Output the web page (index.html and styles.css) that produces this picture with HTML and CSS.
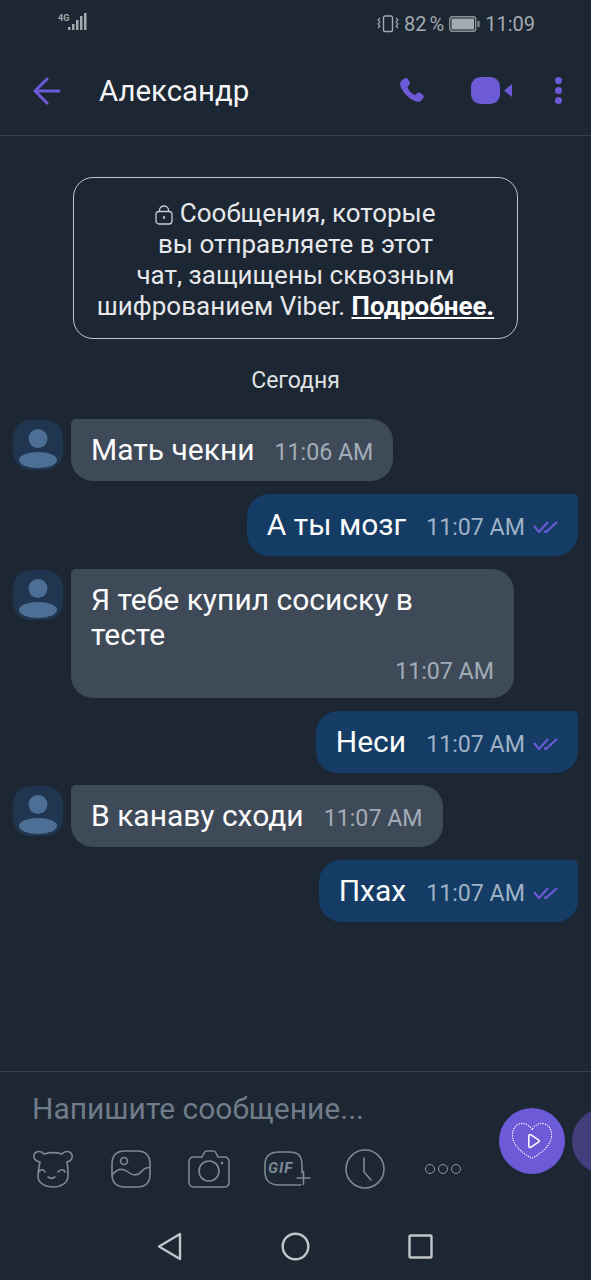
FILE: index.html
```html
<!DOCTYPE html>
<html>
<head>
  <meta charset="utf-8">
  <link rel="stylesheet" href="styles.css">
</head>
<body>
  <div class="status-bar">
    <svg class="signal" width="30" height="20" viewBox="0 0 30 20">
      <text x="0" y="8" class="signal-label">4G</text>
      <rect x="10" y="14" width="2.5" height="3" fill="#a4aab1"/>
      <rect x="14" y="11" width="2.5" height="6" fill="#a4aab1"/>
      <rect x="18" y="7" width="2.5" height="10" fill="#a4aab1"/>
      <rect x="22" y="3" width="2.5" height="14" fill="#a4aab1"/>
      <rect x="26" y="0" width="2.5" height="17" fill="#a4aab1"/>
    </svg>
    <div class="status-right">
      <svg width="22" height="18" viewBox="0 0 22 18" fill="none" stroke="#a4aab1" stroke-width="1.4">
        <rect x="6.5" y="1" width="9" height="15.5" rx="1.5"/>
        <path d="M3 3 1 5l2 2-2 2 2 2-2 2M19 3l2 2-2 2 2 2-2 2 2 2" stroke-width="1.1"/>
      </svg>
      <span class="status-pct">82 %</span>
      <svg width="31" height="16" viewBox="0 0 31 16">
        <rect x="0.7" y="0.7" width="26" height="14.6" rx="2.5" fill="none" stroke="#8e949b" stroke-width="1.4"/>
        <rect x="2.5" y="2.5" width="22.5" height="11" fill="#a4aab1"/>
        <rect x="28.5" y="5" width="2" height="6" fill="#8e949b"/>
      </svg>
      <span class="status-time">11:09</span>
    </div>
  </div>

  <header class="chat-header">
    <svg class="back-arrow" width="28" height="28" viewBox="0 0 28 28" fill="none" stroke="#6c5ad6" stroke-width="3" stroke-linecap="round" stroke-linejoin="round">
      <path d="M26 14H3M14 2 2 14l12 12"/>
    </svg>
    <div class="chat-title">Александр</div>
    <svg class="icon-phone" width="26" height="27" viewBox="0 0 28 28" preserveAspectRatio="none">
      <path d="M6.5 1.2c1.200-.6 2.300-.2 3 .9l2 3.200c.6 1 .4 2.100-.4 2.800L9.600 9.500c-.5.400-.6 1-.3 1.600 1.600 3.300 4 5.800 7.300 7.400.6.300 1.200.2 1.600-.3l1.500-1.500c.8-.8 1.900-.9 2.900-.3l2.900 1.900c1.100.7 1.500 2 .8 3.100-1.200 2.100-2.800 4.300-5.300 4.300C12.500 25.500 1 13.500 1.200 6.700 1.300 4.300 4.500 2.300 6.500 1.200z" fill="#6c5ad6"/>
    </svg>
    <svg class="icon-video" width="41" height="27" viewBox="0 0 41 27">
      <rect x="0" y="0" width="29" height="27" rx="9.5" fill="#6c5ad6"/>
      <path d="M41 7v13l-8-6.500z" fill="#6c5ad6"/>
    </svg>
    <div class="menu-dots"><i></i><i></i><i></i></div>
  </header>

  <main class="chat">
    <div class="notice">
      <svg class="lock" width="18" height="20" viewBox="0 0 18 20" fill="none" stroke="#c9cdd2" stroke-width="1.300">
        <rect x="1" y="6.500" width="16" height="12.500" rx="3"/>
        <path d="M4.500 6.500V5a4.500 4 0 0 1 9 0v1.500"/>
        <path d="M9 11v3" stroke-width="1.600"/>
      </svg>
      Сообщения, которые<br>вы отправляете в этот<br>чат, защищены сквозным<br>шифрованием Viber. <a class="more">Подробнее.</a>
    </div>
    <div class="date">Сегодня</div>

    <div class="row row-in">
      <svg class="avatar" width="50" height="50" viewBox="0 0 50 50">
        <rect width="50" height="50" rx="18" fill="#1f3550"/>
        <circle cx="25" cy="18.500" r="9.500" fill="#4d6f95"/>
        <ellipse cx="25" cy="40" rx="19" ry="8" fill="#4d6f95"/>
      </svg>
      <div class="bubble bubble-in"><span class="text">Мать чекни</span><span class="time">11:06 AM</span></div>
    </div>

    <div class="row row-out">
      <div class="bubble bubble-out"><span class="text">А ты мозг</span><span class="time">11:07 AM</span>
        <svg class="ticks" width="25" height="14" viewBox="0 0 25 14" fill="none" stroke="#6c5ad6" stroke-width="2.100"><path d="M1 6l5 6L15 2M11 11l2 1L24 2"/></svg>
      </div>
    </div>

    <div class="row row-in">
      <svg class="avatar" width="50" height="50" viewBox="0 0 50 50">
        <rect width="50" height="50" rx="18" fill="#1f3550"/>
        <circle cx="25" cy="18.500" r="9.500" fill="#4d6f95"/>
        <ellipse cx="25" cy="40" rx="19" ry="8" fill="#4d6f95"/>
      </svg>
      <div class="bubble bubble-in bubble-long">
        <div class="text">Я тебе купил сосиску в<br>тесте</div>
        <div class="time">11:07 AM</div>
      </div>
    </div>

    <div class="row row-out">
      <div class="bubble bubble-out"><span class="text">Неси</span><span class="time">11:07 AM</span>
        <svg class="ticks" width="25" height="14" viewBox="0 0 25 14" fill="none" stroke="#6c5ad6" stroke-width="2.100"><path d="M1 6l5 6L15 2M11 11l2 1L24 2"/></svg>
      </div>
    </div>

    <div class="row row-in">
      <svg class="avatar" width="50" height="50" viewBox="0 0 50 50">
        <rect width="50" height="50" rx="18" fill="#1f3550"/>
        <circle cx="25" cy="18.500" r="9.500" fill="#4d6f95"/>
        <ellipse cx="25" cy="40" rx="19" ry="8" fill="#4d6f95"/>
      </svg>
      <div class="bubble bubble-in"><span class="text">В канаву сходи</span><span class="time">11:07 AM</span></div>
    </div>

    <div class="row row-out">
      <div class="bubble bubble-out"><span class="text">Пхах</span><span class="time">11:07 AM</span>
        <svg class="ticks" width="25" height="14" viewBox="0 0 25 14" fill="none" stroke="#6c5ad6" stroke-width="2.100"><path d="M1 6l5 6L15 2M11 11l2 1L24 2"/></svg>
      </div>
    </div>
  </main>

  <footer class="composer">
    <div class="placeholder">Напишите сообщение...</div>
    <div class="tools">
      <div class="tool">
        <svg width="42" height="38" viewBox="0 0 42 38" fill="none" stroke="#7d8996" stroke-width="1.600" stroke-linecap="round">
          <path d="M8 12C3 11 1 8 2 5 3 1 9 0 12 4c5-1.500 13-1.500 18 0 3-4 9-3 10 1 1 3-1 6-5 7 1 5 1 10 1 14 0 7-7 11-15 11S6 33 6 26c0-4 1-9 2-14z"/>
          <path d="M7 22c1-3 5-3 6 0M26 22c2-3 6-3 7 0M16 27c2 1.500 5 1.500 7 0"/>
        </svg>
      </div>
      <div class="tool">
        <svg width="40" height="38" viewBox="0 0 40 38" fill="none" stroke="#7d8996" stroke-width="1.600">
          <path d="M14 1h12c9 0 13 4 13 13v10c0 9-4 13-13 13H14C5 37 1 33 1 24V14C1 5 5 1 14 1z"/>
          <circle cx="13" cy="11" r="3.500"/>
          <path d="M1 25c6-7 11-7 16-3s10 4 14-1c3-3 6-4 8-3"/>
        </svg>
      </div>
      <div class="tool">
        <svg width="42" height="38" viewBox="0 0 42 38" fill="none" stroke="#7d8996" stroke-width="1.600">
          <path d="M6 7h8l2-4c.5-1.300 1.500-2 3-2h6c1.500 0 2.500.7 3 2l2 4h6c3 0 5 2 5 5v20c0 3-2 5-5 5H6c-3 0-5-2-5-5V12c0-3 2-5 5-5z"/>
          <circle cx="21" cy="21" r="10"/>
          <circle cx="34" cy="13" r="1.300" fill="#7d8996" stroke="none"/>
        </svg>
      </div>
      <div class="tool tool-gif">
        <svg width="47" height="36" viewBox="0 0 47 36" fill="none" stroke="#7d8996" stroke-width="1.600" stroke-linecap="round">
          <path d="M37 34H15C6 34 1 29 1 21v-7C1 5 6 1 15 1h10c9 0 13 3 13 14v7"/>
          <path d="M33 27h13M39.500 20.500v13" stroke-width="1.600"/>
        </svg>
        <span class="gif-label">GIF</span>
      </div>
      <div class="tool">
        <svg width="40" height="40" viewBox="0 0 40 40" fill="none" stroke="#7d8996" stroke-width="1.600" stroke-linecap="round">
          <circle cx="20" cy="20" r="19"/>
          <path d="M19 9v14l7 8"/>
        </svg>
      </div>
      <div class="tool">
        <div class="more-dots"><i></i><i></i><i></i></div>
      </div>
    </div>
    <div class="round-btn">
      <svg width="44" height="38" viewBox="0 0 46 42" fill="none" stroke="#fff">
        <path d="M23 8C19 2 12 0 7 3 1 7 0 15 3 22c4 8 12 14 20 18 8-4 16-10 20-18 3-7 2-15-4-19-5-3-12-1-16 5z" stroke-width="1.600" stroke-linecap="round" stroke-dasharray="0 2.700"/>
        <path d="M19.500 15c0-1 1-1.500 2-1l9 6c.8.500.8 1.500 0 2l-9 6c-1 .5-2 0-2-1z" stroke-width="1.700"/>
      </svg>
    </div>
    <div class="round-btn-next"></div>
  </footer>

  <nav class="nav-bar">
    <svg width="25" height="29" viewBox="0 0 25 29" fill="none" stroke="#c1c5c9" stroke-width="2.400" stroke-linejoin="round"><path d="M23 2v25L2 14.500z"/></svg>
    <svg width="29" height="29" viewBox="0 0 29 29" fill="none" stroke="#c1c5c9" stroke-width="2.400"><circle cx="14.500" cy="14.500" r="12.800"/></svg>
    <svg class="nav-square" width="25" height="25" viewBox="0 0 25 25" fill="none" stroke="#c1c5c9" stroke-width="2.400" stroke-linejoin="round"><rect x="1.500" y="1.500" width="22" height="22" rx="1"/></svg>
  </nav>
</body>
</html>
```

FILE: styles.css
```css
html, body {
  margin: 0;
  padding: 0;
}

body {
  width: 591px;
  height: 1280px;
  overflow: hidden;
  display: flex;
  flex-direction: column;
  background-color: #1d2633;
  color: #fff;
  font-family: Roboto, "Noto Sans", sans-serif;
}

.status-bar {
  height: 46px;
  flex: none;
  display: flex;
  justify-content: space-between;
  padding: 13px 56px 0 58px;
  box-sizing: border-box;
  color: #a4aab1;
  font-size: 20px;
}

.signal-label {
  font-size: 9px;
  font-weight: 700;
  fill: #a4aab1;
}

.status-right {
  display: flex;
  align-items: center;
  height: 21px;
  gap: 5px;
}

.status-pct {
  word-spacing: -2px;
}

.chat-header {
  height: 90px;
  flex: none;
  display: flex;
  align-items: center;
  border-bottom: 1px solid #354050;
  box-sizing: border-box;
}

.back-arrow {
  margin-left: 33px;
}

.chat-title {
  margin-left: 38px;
  font-size: 29.4px;
  color: #f4f5f6;
  flex: 1;
}

.icon-phone {
  margin-right: 46px;
}

.menu-dots {
  margin-left: 42.5px;
  margin-right: 29.5px;
  display: flex;
  flex-direction: column;
  gap: 3px;
}

.menu-dots i {
  display: block;
  width: 7px;
  height: 7px;
  border-radius: 50%;
  background-color: #6c5ad6;
}

.chat {
  flex: 1;
  display: flex;
  flex-direction: column;
  gap: 12.6px;
  padding-top: 41px;
}

.notice {
  margin: 0 73px;
  height: 162px;
  box-sizing: border-box;
  border: 1px solid #c2c6cb;
  border-radius: 20px;
  padding: 20px 0 0;
  text-align: center;
  font-size: 26px;
  line-height: 31px;
  color: #e6e8ea;
}

.lock {
  vertical-align: -3px;
}

.more {
  font-weight: 700;
  color: #fff;
  text-decoration: underline;
}

.date {
  text-align: center;
  font-size: 23px;
  line-height: 24px;
  color: #dfe1e4;
  margin-top: 17px;
  margin-bottom: 14.2px;
}

.row {
  display: flex;
  align-items: flex-start;
}

.row-in {
  padding-left: 13px;
}

.row-out {
  justify-content: flex-end;
  padding-right: 13px;
}

.avatar {
  flex: none;
  margin-top: 1px;
  margin-right: 8px;
}

.bubble {
  display: flex;
  align-items: baseline;
  height: 62px;
  box-sizing: border-box;
  padding: 13px 20px 0;
}

.bubble-in {
  background-color: #3f4a59;
  border-radius: 5px 22px 22px 22px;
}

.bubble-out {
  background-color: #143c65;
  border-radius: 22px 5px 22px 22px;
}

.bubble-long {
  display: block;
  width: 443px;
  height: 129.5px;
}

.text {
  font-size: 30px;
  line-height: 35.5px;
  color: #fbfbfc;
}

.time {
  margin-left: 20px;
  font-size: 23.2px;
  color: #a2acb7;
}

.bubble-long .time {
  margin-top: 3px;
  line-height: 30px;
  text-align: right;
}

.bubble-out .time {
  color: #9fb2c6;
}

.ticks {
  margin-left: 8px;
  align-self: center;
  margin-top: -10px;
  transform: translateY(1px);
}

.composer {
  position: relative;
  height: 141px;
  flex: none;
  box-sizing: border-box;
  border-top: 1px solid #354050;
  padding-top: 19px;
}

.placeholder {
  margin-left: 32px;
  font-size: 30px;
  line-height: 36px;
  color: #707c89;
}

.tools {
  display: flex;
  margin-top: 22px;
  padding-left: 14px;
}

.tool {
  position: relative;
  width: 78px;
  height: 40px;
  display: flex;
  justify-content: center;
  align-items: center;
}

.gif-label {
  position: absolute;
  left: 20px;
  top: 10px;
  font-size: 15px;
  font-weight: 700;
  font-style: italic;
  letter-spacing: 1px;
  color: #7d8996;
}

.more-dots {
  display: flex;
  gap: 3px;
}

.more-dots i {
  display: block;
  box-sizing: border-box;
  border: 1.5px solid #8a95a1;
  border-radius: 50%;
  width: 10px;
  height: 10px;
}

.round-btn {
  position: absolute;
  left: 499px;
  top: 36px;
  width: 66px;
  height: 66px;
  border-radius: 50%;
  background-color: #6c5ad6;
  display: flex;
  align-items: center;
  justify-content: center;
}

.round-btn-next {
  position: absolute;
  left: 572px;
  top: 36px;
  width: 19px;
  height: 66px;
  background-color: #433d7c;
  clip-path: circle(33px at 33px 33px);
}

.nav-bar {
  height: 68px;
  flex: none;
  box-sizing: border-box;
  display: flex;
  align-items: flex-start;
  padding: 20px 0 0 157px;
  gap: 99px;
}

.nav-square {
  margin-top: 2px;
  margin-left: -1px;
}
```
